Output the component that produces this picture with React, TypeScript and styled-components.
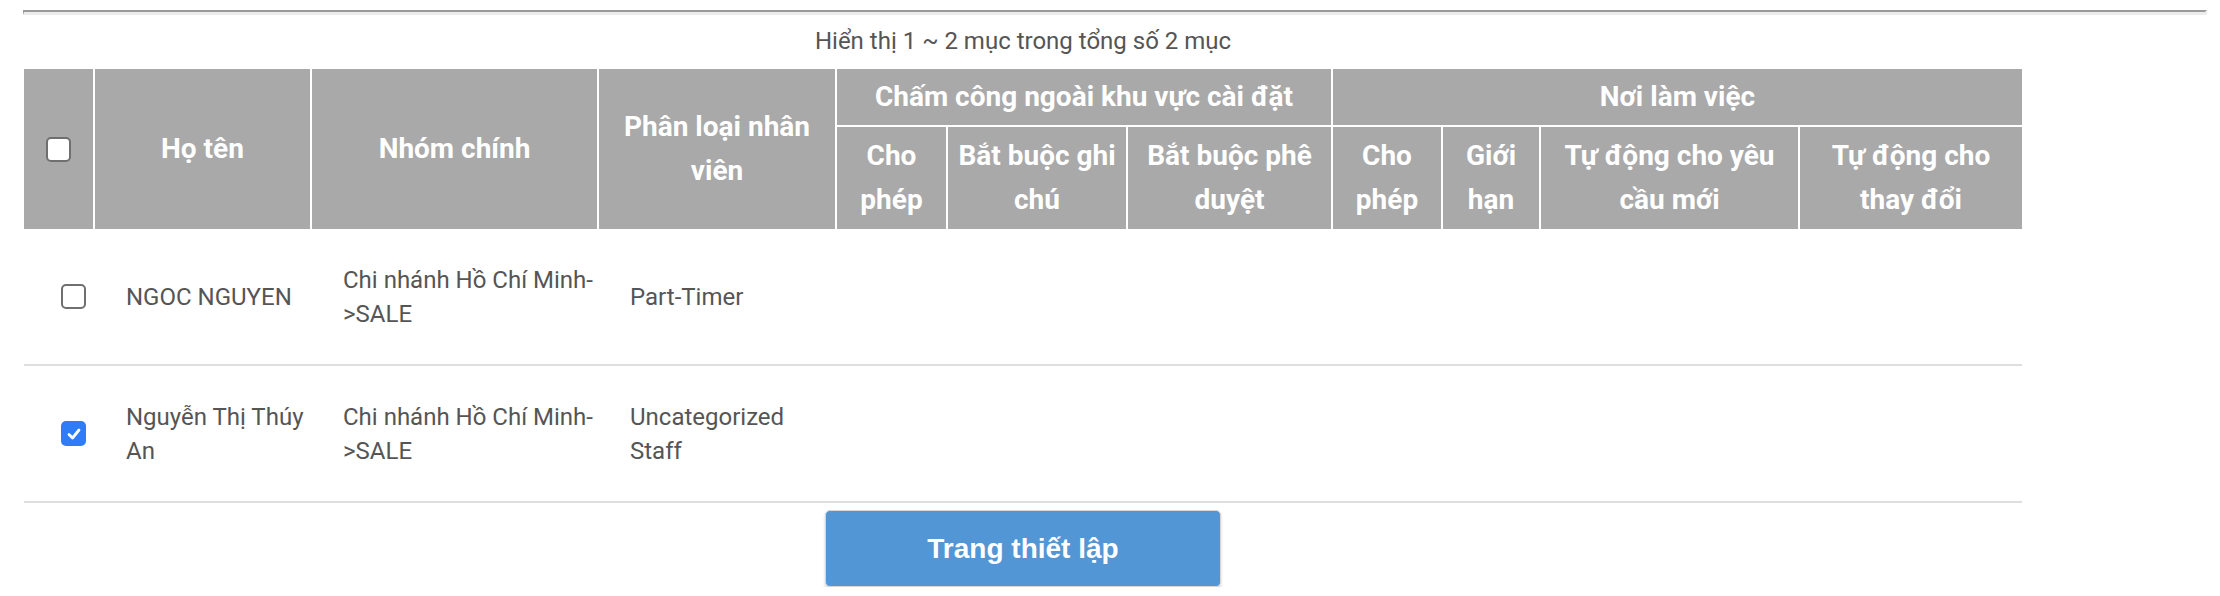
import React from 'react';
import styled, { createGlobalStyle } from 'styled-components';

const GlobalStyle = createGlobalStyle`
  html, body {
    margin: 0;
    padding: 0;
    background: #ffffff;
  }
  * {
    box-sizing: border-box;
  }
`;

const COLUMNS = '71px 217px 287px 238px 111px 180px 205px 110px 98px 259px 222px';

interface IStaff {
  id: number;
  name: string;
  group: string;
  type: string;
  checked: boolean;
}

const staffList: IStaff[] = [
  {
    id: 1,
    name: 'NGOC NGUYEN',
    group: 'Chi nhánh Hồ Chí Minh->SALE',
    type: 'Part-Timer',
    checked: false,
  },
  {
    id: 2,
    name: 'Nguyễn Thị Thúy An',
    group: 'Chi nhánh Hồ Chí Minh->SALE',
    type: 'Uncategorized Staff',
    checked: true,
  },
];

const CheckBox = ({ checked }: { checked: boolean }) => (
  <StCheckBox $checked={checked}>
    {checked && (
      <svg width='16' height='16' viewBox='0 0 16 16'>
        <path
          d='M3 8.5 L6.5 12 L13 4'
          fill='none'
          stroke='#ffffff'
          strokeWidth='2.8'
          strokeLinecap='round'
          strokeLinejoin='round'
        />
      </svg>
    )}
  </StCheckBox>
);

const App = () => {
  return (
    <StPage>
      <GlobalStyle />
      <StDivider />
      <StContent>
        <StCaption>Hiển thị 1 ~ 2 mục trong tổng số 2 mục</StCaption>
        <StHeader>
          <StHeadCell $col='1' $row='1 / 3'>
            <CheckBox checked={false} />
          </StHeadCell>
          <StHeadCell $col='2' $row='1 / 3'>
            Họ tên
          </StHeadCell>
          <StHeadCell $col='3' $row='1 / 3'>
            Nhóm chính
          </StHeadCell>
          <StHeadCell $col='4' $row='1 / 3'>
            Phân loại nhân viên
          </StHeadCell>
          <StHeadCell $col='5 / 8' $row='1' $group>
            Chấm công ngoài khu vực cài đặt
          </StHeadCell>
          <StHeadCell $col='8 / 12' $row='1' $group $last>
            Nơi làm việc
          </StHeadCell>
          <StHeadCell $col='5' $row='2'>
            Cho phép
          </StHeadCell>
          <StHeadCell $col='6' $row='2'>
            Bắt buộc ghi chú
          </StHeadCell>
          <StHeadCell $col='7' $row='2'>
            Bắt buộc phê duyệt
          </StHeadCell>
          <StHeadCell $col='8' $row='2'>
            Cho phép
          </StHeadCell>
          <StHeadCell $col='9' $row='2'>
            Giới hạn
          </StHeadCell>
          <StHeadCell $col='10' $row='2'>
            Tự động cho yêu cầu mới
          </StHeadCell>
          <StHeadCell $col='11' $row='2' $last>
            Tự động cho thay đổi
          </StHeadCell>
        </StHeader>
        {staffList.map((v) => (
          <StRow key={v.id}>
            <StCheckCell>
              <CheckBox checked={v.checked} />
            </StCheckCell>
            <StCell>{v.name}</StCell>
            <StCell>{v.group}</StCell>
            <StCell>{v.type}</StCell>
            <StCell />
            <StCell />
            <StCell />
            <StCell />
            <StCell />
            <StCell />
            <StCell />
          </StRow>
        ))}
        <StButton type='button'>Trang thiết lập</StButton>
      </StContent>
    </StPage>
  );
};

export default App;

const StPage = styled.div`
  padding: 10px 13px 0 23px;
  font-family: Roboto, 'Noto Sans', sans-serif;
`;
const StDivider = styled.div`
  height: 5px;
  border-top: 2px solid #9a9a9a;
  border-left: 1px solid #9a9a9a;
  border-bottom: 3px solid #ececec;
  border-right: 2px solid #ececec;
`;
const StContent = styled.div`
  width: 1998px;
  margin-left: 1px;
  display: flex;
  flex-direction: column;
`;
const StCaption = styled.div`
  height: 54px;
  display: flex;
  align-items: center;
  justify-content: center;
  padding-bottom: 2px;
  font-size: 24px;
  color: #555555;
`;
const StHeader = styled.div`
  display: grid;
  grid-template-columns: ${COLUMNS};
  grid-template-rows: 58px 102px;
  background: #a9a9a9;
`;
const StHeadCell = styled.div<{
  $col: string;
  $row: string;
  $group?: boolean;
  $last?: boolean;
}>`
  grid-column: ${(p) => p.$col};
  grid-row: ${(p) => p.$row};
  display: flex;
  align-items: center;
  justify-content: center;
  padding: 0 4px;
  text-align: center;
  color: #ffffff;
  font-weight: 700;
  font-size: 28px;
  line-height: 44px;
  border-right: ${(p) => (p.$last ? 'none' : '2px solid #ffffff')};
  border-bottom: ${(p) => (p.$group ? '2px solid #ffffff' : 'none')};
`;
const StRow = styled.div`
  display: grid;
  grid-template-columns: ${COLUMNS};
  height: 137px;
  align-items: center;
  border-bottom: 2px solid #dedede;
`;
const StCell = styled.div`
  padding: 0 2px 0 31px;
  font-size: 24px;
  line-height: 34px;
  color: #555555;
`;
const StCheckCell = styled.div`
  padding-left: 37px;
  display: flex;
  align-items: center;
`;
const StCheckBox = styled.span<{ $checked: boolean }>`
  width: 25px;
  height: 25px;
  border-radius: 5px;
  display: inline-flex;
  align-items: center;
  justify-content: center;
  background: ${(p) => (p.$checked ? '#2e7cf6' : '#ffffff')};
  border: ${(p) => (p.$checked ? 'none' : '2px solid #6f6f6f')};
`;
const StButton = styled.button`
  align-self: center;
  margin-top: 7px;
  width: 396px;
  height: 77px;
  border: 1px solid #d6d6d6;
  border-radius: 5px;
  background: #5296d5;
  box-shadow: 0 2px 3px rgba(0, 0, 0, 0.18);
  color: #ffffff;
  font-family: 'Liberation Sans', Arial, sans-serif;
  font-weight: 700;
  font-size: 28px;
`;
